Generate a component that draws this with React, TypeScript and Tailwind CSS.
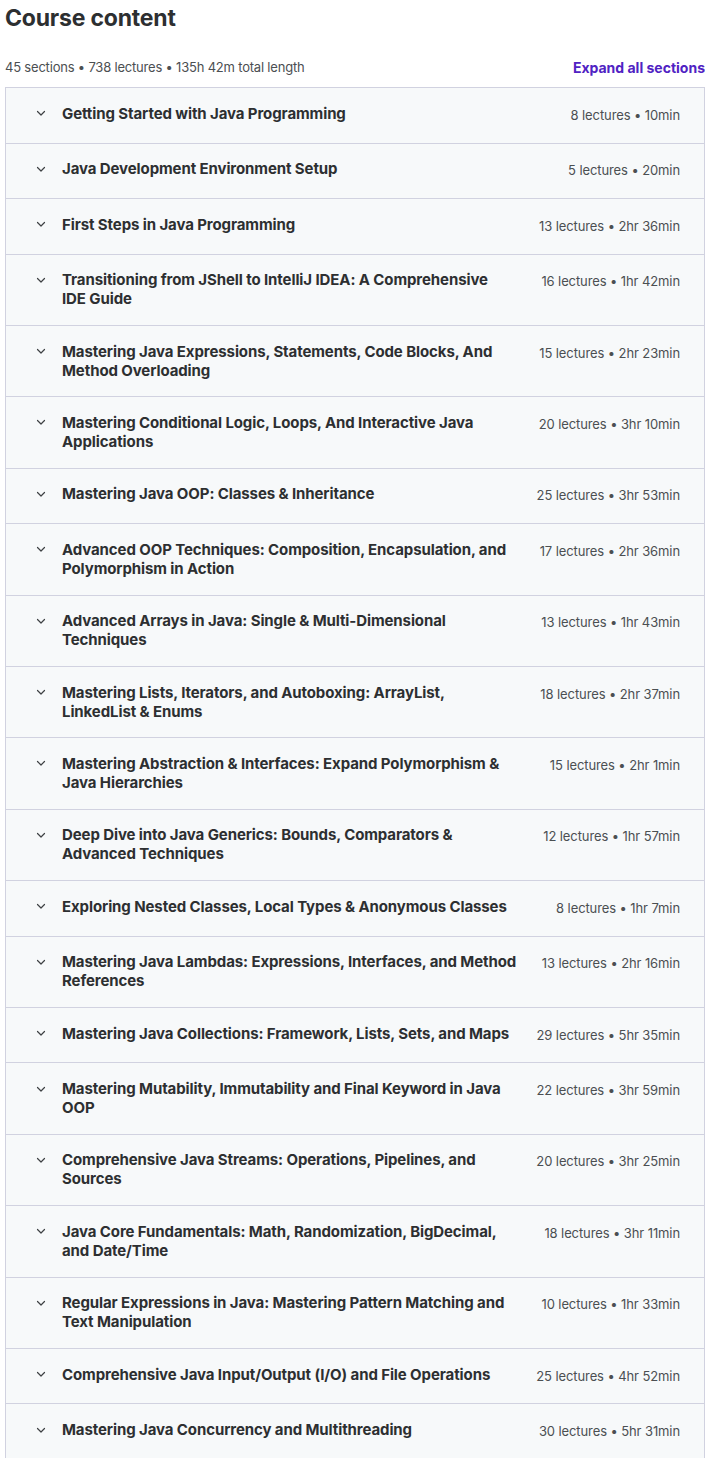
import React from "react";

const sections: [string, string][] = [
  ["Getting Started with Java Programming", "8 lectures • 10min"],
  ["Java Development Environment Setup", "5 lectures • 20min"],
  ["First Steps in Java Programming", "13 lectures • 2hr 36min"],
  ["Transitioning from JShell to IntelliJ IDEA: A Comprehensive\nIDE Guide", "16 lectures • 1hr 42min"],
  ["Mastering Java Expressions, Statements, Code Blocks, And Method Overloading", "15 lectures • 2hr 23min"],
  ["Mastering Conditional Logic, Loops, And Interactive Java Applications", "20 lectures • 3hr 10min"],
  ["Mastering Java OOP: Classes & Inheritance", "25 lectures • 3hr 53min"],
  ["Advanced OOP Techniques: Composition, Encapsulation, and Polymorphism in Action", "17 lectures • 2hr 36min"],
  ["Advanced Arrays in Java: Single & Multi-Dimensional Techniques", "13 lectures • 1hr 43min"],
  ["Mastering Lists, Iterators, and Autoboxing: ArrayList,\nLinkedList & Enums", "18 lectures • 2hr 37min"],
  ["Mastering Abstraction & Interfaces: Expand Polymorphism & Java Hierarchies", "15 lectures • 2hr 1min"],
  ["Deep Dive into Java Generics: Bounds, Comparators & Advanced Techniques", "12 lectures • 1hr 57min"],
  ["Exploring Nested Classes, Local Types & Anonymous Classes", "8 lectures • 1hr 7min"],
  ["Mastering Java Lambdas: Expressions, Interfaces, and Method References", "13 lectures • 2hr 16min"],
  ["Mastering Java Collections: Framework, Lists, Sets, and Maps", "29 lectures • 5hr 35min"],
  ["Mastering Mutability, Immutability and Final Keyword in Java OOP", "22 lectures • 3hr 59min"],
  ["Comprehensive Java Streams: Operations, Pipelines, and Sources", "20 lectures • 3hr 25min"],
  ["Java Core Fundamentals: Math, Randomization, BigDecimal,\nand Date/Time", "18 lectures • 3hr 11min"],
  ["Regular Expressions in Java: Mastering Pattern Matching and Text Manipulation", "10 lectures • 1hr 33min"],
  ["Comprehensive Java Input/Output (I/O) and File Operations", "25 lectures • 4hr 52min"],
  ["Mastering Java Concurrency and Multithreading", "30 lectures • 5hr 31min"],
];

const Chevron = () => (
  <svg width="10" height="10" viewBox="0 0 10 10" className="mt-[4.5px] shrink-0">
    <path d="M1.5 3.5 L5 7 L8.5 3.5" fill="none" stroke="#3e4143" strokeWidth="1.2" strokeLinecap="round" strokeLinejoin="round" />
  </svg>
);

const App = () => {
  return (
    <div className="min-h-[1458px] bg-white pl-[5px] font-['Inter',sans-serif] text-[#2d2f31]">
      <h2 className="pt-[3px] text-[23px] font-bold leading-[30px] tracking-[-0.2px]">Course content</h2>
      <div className="mt-[26px] flex items-end justify-between pb-[11px]">
        <span className="text-[13px] leading-[17px] tracking-[-0.2px] text-[#4b4f52]">45 sections • 738 lectures • 135h 42m total length</span>
        <button className="text-[14px] font-bold leading-[17px] text-[#5022c3]">Expand all sections</button>
      </div>
      <div className="w-[700px] border border-b-0 border-[#d1d2e0]">
        {sections.map(([title, meta]) => (
          <div
            key={title}
            className="flex min-h-[55.5px] items-start border-b border-[#d1d2e0] bg-[#f7f9fa] pb-[16.7px] pl-[30px] pr-[24px] pt-[15.7px]"
          >
            <Chevron />
            <div className="ml-[16px] flex-1 whitespace-pre-line pr-[14px] text-[15px] font-bold leading-[19px] tracking-[-0.1px] text-[#2d2f31]">
              {title}
            </div>
            <div className="mt-[3px] shrink-0 text-[13px] leading-[17px] tracking-[-0.1px] text-[#4b4f52]">{meta}</div>
          </div>
        ))}
      </div>
    </div>
  );
};

export default App;
